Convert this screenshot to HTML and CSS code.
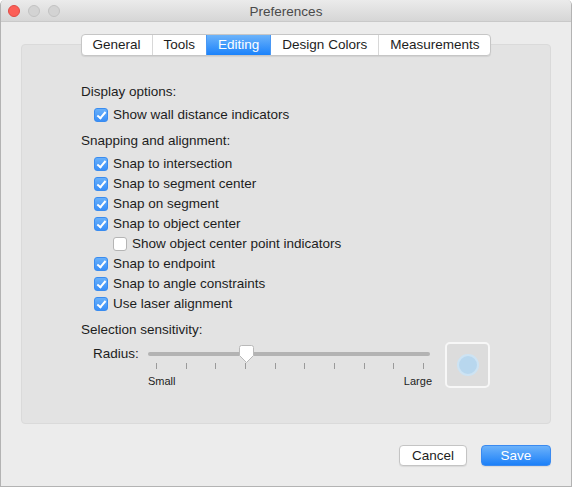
FILE: index.html
```html
<!DOCTYPE html>
<html>
<head>
<meta charset="utf-8">
<link rel="stylesheet" href="styles.css">
</head>
<body>
<div class="window">
  <div class="titlebar">
    <div class="lights">
      <span class="light red"></span>
      <span class="light gray"></span>
      <span class="light gray"></span>
    </div>
    <div class="title">Preferences</div>
  </div>
  <div class="content">
    <div class="tabs">
      <div class="tab">General</div>
      <div class="tab">Tools</div>
      <div class="tab active">Editing</div>
      <div class="tab">Design Colors</div>
      <div class="tab">Measurements</div>
    </div>
    <div class="panel">
      <div class="header">Display options:</div>
      <div class="row first"><span class="cb on"></span>Show wall distance indicators</div>
      <div class="header second">Snapping and alignment:</div>
      <div class="row first"><span class="cb on"></span>Snap to intersection</div>
      <div class="row"><span class="cb on"></span>Snap to segment center</div>
      <div class="row"><span class="cb on"></span>Snap on segment</div>
      <div class="row"><span class="cb on"></span>Snap to object center</div>
      <div class="row indent"><span class="cb"></span>Show object center point indicators</div>
      <div class="row"><span class="cb on"></span>Snap to endpoint</div>
      <div class="row"><span class="cb on"></span>Snap to angle constraints</div>
      <div class="row"><span class="cb on"></span>Use laser alignment</div>
      <div class="header second">Selection sensitivity:</div>
      <div class="slider-row">
        <div class="slider-label">Radius:</div>
        <div class="slider">
          <div class="track-area">
            <div class="track"></div>
            <svg class="thumb" width="17" height="19" viewBox="0 0 17 19">
              <path d="M1.5 2.5 Q1.5 0.5 3.5 0.5 L13.5 0.5 Q15.5 0.5 15.5 2.5 L15.5 10.5 L8.5 17.5 L1.5 10.5 Z" fill="#ffffff" stroke="#b9b9b9" stroke-width="1"/>
            </svg>
          </div>
          <div class="ticks">
            <i></i><i></i><i></i><i></i><i></i><i></i><i></i><i></i><i></i><i></i>
          </div>
          <div class="scale">
            <span>Small</span>
            <span>Large</span>
          </div>
        </div>
        <div class="preview"><div class="dot"></div></div>
      </div>
    </div>
    <div class="buttons">
      <button class="btn">Cancel</button>
      <button class="btn primary">Save</button>
    </div>
  </div>
</div>
</body>
</html>
```
FILE: styles.css
```css
html, body {
  margin: 0;
  padding: 0;
}
body {
  width: 572px;
  height: 487px;
  overflow: hidden;
  background: #ffffff;
  font-family: "Liberation Sans", Arial, sans-serif;
  font-size: 13.5px;
  color: #1d1d1d;
}
.window {
  box-sizing: border-box;
  width: 572px;
  height: 487px;
  background: #ececec;
  border: 1px solid #b3b3b3;
  border-top: none;
  border-radius: 5px 5px 0 0;
  overflow: hidden;
  display: flex;
  flex-direction: column;
}
.titlebar {
  height: 23px;
  box-sizing: border-box;
  background: linear-gradient(#ebebeb, #d6d6d6);
  border-bottom: 1px solid #c9c9c9;
  display: flex;
  align-items: center;
  position: relative;
}
.lights {
  display: flex;
  gap: 8px;
  padding-left: 7px;
}
.light {
  width: 12px;
  height: 12px;
  border-radius: 50%;
  box-sizing: border-box;
}
.light.red {
  background: #fc5f57;
  border: 1px solid #de4b45;
}
.light.gray {
  background: #d3d3d3;
  border: 1px solid #c2c2c2;
}
.title {
  position: absolute;
  left: 0;
  right: 0;
  top: 0;
  line-height: 24px;
  text-align: center;
  color: #4a4a4a;
  font-size: 13.5px;
  pointer-events: none;
}
.content {
  flex: 1;
  display: flex;
  flex-direction: column;
  padding: 0 20px 20px 20px;
}
.tabs {
  align-self: center;
  margin-top: 12px;
  display: flex;
  height: 22px;
  box-sizing: border-box;
  background: #ffffff;
  border: 1px solid #c6c6c6;
  border-radius: 4px;
  box-shadow: 0 1px 1px rgba(0,0,0,0.08);
  position: relative;
  z-index: 1;
  overflow: hidden;
}
.tab {
  line-height: 20px;
  padding: 0 11px;
  border-left: 1px solid #d8d8d8;
  color: #1d1d1d;
}
.tab:first-child {
  border-left: none;
}
.tab.active {
  background: linear-gradient(#6cb3fa, #1b82fb);
  color: #ffffff;
  border-left-color: #4a98f4;
}
.tab.active + .tab {
  border-left-color: #4a98f4;
}
.panel {
  margin-top: -12px;
  height: 380px;
  box-sizing: border-box;
  background: #e3e3e3;
  border: 1px solid #dadada;
  border-radius: 4px;
  padding: 37px 20px 0 59px;
  display: flex;
  flex-direction: column;
}
.header {
  line-height: 20px;
}
.header.second {
  margin-top: 6px;
}
.row {
  line-height: 20px;
  display: flex;
  align-items: center;
  padding-left: 13px;
}
.row.first {
  margin-top: 3px;
}
.row.indent {
  padding-left: 32px;
}
.cb {
  width: 14px;
  height: 14px;
  box-sizing: border-box;
  border-radius: 3px;
  background: #ffffff;
  border: 1px solid #b5b5b5;
  margin-right: 5px;
  flex: none;
  position: relative;
}
.cb.on {
  background: linear-gradient(#68b0fa, #3a8ff7);
  border: 1px solid #3a8cf0;
}
.cb.on::after {
  content: "";
  position: absolute;
  left: 4px;
  top: 1px;
  width: 3px;
  height: 7px;
  border-right: 2px solid #ffffff;
  border-bottom: 2px solid #ffffff;
  transform: rotate(40deg);
}
.slider-row {
  margin-top: 0;
  display: flex;
  align-items: flex-start;
}
.slider-label {
  width: 55px;
  padding-left: 12px;
  line-height: 20px;
  margin-top: 4px;
}
.slider {
  width: 282px;
  display: flex;
  flex-direction: column;
}
.track-area {
  height: 20px;
  margin-top: 4px;
  position: relative;
  display: flex;
  align-items: center;
}
.track {
  width: 100%;
  height: 4px;
  border-radius: 2px;
  background: #b3b3b3;
}
.thumb {
  position: absolute;
  left: 90px;
  top: 1px;
}
.ticks {
  display: flex;
  justify-content: space-between;
  padding: 0 6px 0 8px;
  height: 6px;
  margin-top: -1px;
}
.ticks i {
  display: block;
  width: 1px;
  height: 6px;
  background: #9a9a9a;
}
.scale {
  display: flex;
  justify-content: space-between;
  font-size: 11px;
  line-height: 14px;
  margin-top: 5px;
}
.scale span:last-child {
  margin-right: -2px;
}
.preview {
  margin-left: 15px;
  margin-top: 2px;
  width: 45px;
  height: 46px;
  box-sizing: border-box;
  background: #dcdcdc;
  border: 2px solid #f7f7f7;
  border-radius: 5px;
  display: flex;
  align-items: center;
  justify-content: center;
}
.dot {
  width: 22px;
  height: 22px;
  box-sizing: border-box;
  border-radius: 50%;
  background: #b8d7ee;
  border: 2px solid #cde3f3;
}
.buttons {
  margin-top: 21px;
  display: flex;
  justify-content: flex-end;
  gap: 14px;
}
.btn {
  font-family: "Liberation Sans", Arial, sans-serif;
  font-size: 13.5px;
  height: 21px;
  box-sizing: border-box;
  padding: 0;
  border-radius: 4px;
  border: 1px solid #c4c4c4;
  background: #ffffff;
  color: #1d1d1d;
  width: 68px;
  box-shadow: 0 1px 1px rgba(0,0,0,0.08);
}
.btn.primary {
  width: 70px;
  background: linear-gradient(#6cb2fa, #1c80f8);
  border-color: #3a8af0;
  color: #ffffff;
}
```
